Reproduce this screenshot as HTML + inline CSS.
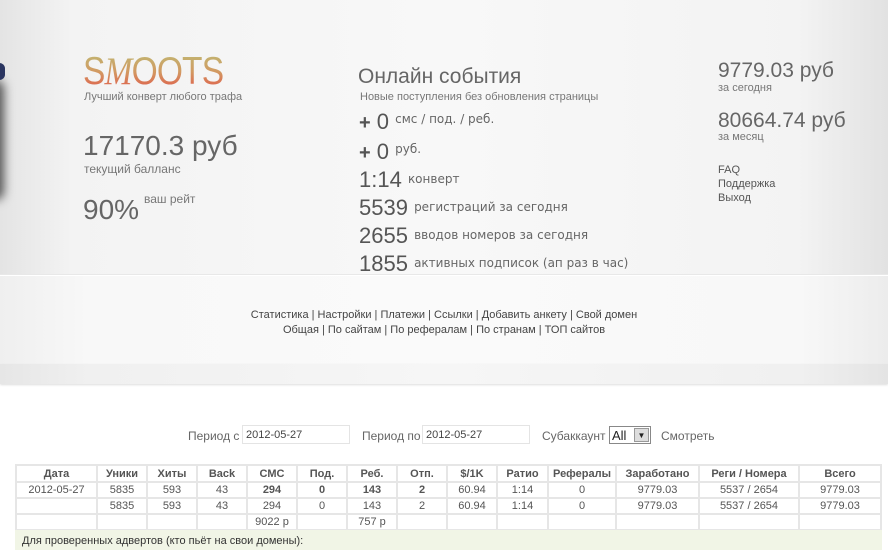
<!DOCTYPE html>
<html><head><meta charset="utf-8"><style>
*{margin:0;padding:0;box-sizing:border-box}
body{width:888px;height:543px;overflow:hidden;background:#fff;font-family:"Liberation Sans",Arial,sans-serif;color:#666;position:relative}
.a{position:absolute;white-space:nowrap}
.panel{position:absolute;left:0;width:888px;background:linear-gradient(90deg,#e4e4e4 0%,#f3f3f3 8%,#f8f8f8 50%,#f3f3f3 90%,#e2e2e2 100%)}
.logo{font-size:39px;line-height:39px;letter-spacing:-1px;transform:scaleX(0.86);transform-origin:0 0;background:linear-gradient(180deg,#bfb873 0%,#d29a62 50%,#e0584a 100%);-webkit-background-clip:text;background-clip:text;color:transparent}
.big{font-size:28px;color:#666}
.sm{font-size:11px;color:#777}
.ev{font-size:22px;color:#555}
.evs{font-family:"DejaVu Sans",sans-serif;font-size:12px;color:#666}
table{position:absolute;left:15px;top:464px;border-collapse:collapse;font-size:11px;color:#555}
td{border:2px solid #e6e6e6;height:16px;text-align:center;padding:0}
th{border:2px solid #e6e6e6;height:17px;font-weight:bold;color:#555;font-size:11px}
.inp{position:absolute;height:19px;border:1px solid #e4e4e4;background:#fff;font-size:11px;padding:3px 3px;color:#444}
</style></head><body>
<div class="panel" style="top:0;height:274px"></div>
<div class="panel" style="top:274px;height:1px;background:#e8e8e8"></div>
<div class="panel" style="top:276px;height:88px;background:linear-gradient(90deg,#efefef 0%,#f8f8f8 10%,#fafafa 50%,#f8f8f8 90%,#ececec 100%)"></div>
<div class="panel" style="top:364px;height:20px;background:linear-gradient(90deg,#e6e6e6 0%,#f0f0f0 10%,#f6f6f6 50%,#f0f0f0 90%,#e4e4e4 100%);box-shadow:0 1px 2px #ddd"></div>
<div class="a" style="left:-14px;top:80px;width:18px;height:120px;border-radius:9px;background:#555;filter:blur(5px)"></div>
<div class="a" style="left:-6px;top:63px;width:11px;height:17px;border-radius:6px;background:#2a3560"></div>

<div class="a logo" style="left:83px;top:52px">S<span style="font-family:'Liberation Serif',serif;font-style:italic">M</span>OOTS</div>
<div class="a sm" style="left:84px;top:91px">Лучший конверт любого трафа</div>
<div class="a big" style="left:83px;top:130px">17170.3 руб</div>
<div class="a sm" style="left:84px;top:162px;font-size:12px">текущий балланс</div>
<div class="a big" style="left:83px;top:194px">90%</div>
<div class="a sm" style="left:144px;top:192px;font-size:12px">ваш рейт</div>

<div class="a" style="left:358px;top:65px;font-size:21px;color:#666">Онлайн события</div>
<div class="a sm" style="left:360px;top:91px">Новые поступления без обновления страницы</div>
<div class="a ev" style="left:359px;top:109px"><b style="font-size:20px">+</b> 0 <span class="evs" style="vertical-align:6px">смс / под. / реб.</span></div>
<div class="a ev" style="left:359px;top:139px"><b style="font-size:20px">+</b> 0 <span class="evs" style="vertical-align:6px">руб.</span></div>
<div class="a ev" style="left:359px;top:167px">1:14 <span class="evs" style="vertical-align:4px">конверт</span></div>
<div class="a ev" style="left:359px;top:195px">5539 <span class="evs" style="vertical-align:4px">регистраций за сегодня</span></div>
<div class="a ev" style="left:359px;top:223px">2655 <span class="evs" style="vertical-align:4px">вводов номеров за сегодня</span></div>
<div class="a ev" style="left:359px;top:251px">1855 <span class="evs" style="vertical-align:4px">активных подписок (ап раз в час)</span></div>

<div class="a" style="left:718px;top:59px;font-size:21px;color:#666">9779.03 руб</div>
<div class="a sm" style="left:718px;top:82px;font-size:11px">за сегодня</div>
<div class="a" style="left:718px;top:109px;font-size:21px;color:#666">80664.74 руб</div>
<div class="a sm" style="left:718px;top:131px;font-size:11px">за месяц</div>
<div class="a sm" style="left:718px;top:163px;color:#555;line-height:14px">FAQ<br>Поддержка<br>Выход</div>

<div class="a" style="left:0;width:888px;top:308px;text-align:center;font-size:11px;color:#444;line-height:15px">Статистика | Настройки | Платежи | Ссылки | Добавить анкету | Свой домен<br>Общая | По сайтам | По рефералам | По странам | ТОП сайтов</div>

<div class="a" style="left:188px;top:429px;font-size:12px;color:#666">Период с</div>
<div class="inp" style="left:242px;top:425px;width:108px">2012-05-27</div>
<div class="a" style="left:362px;top:429px;font-size:12px;color:#666">Период по</div>
<div class="inp" style="left:422px;top:425px;width:108px">2012-05-27</div>
<div class="a" style="left:542px;top:429px;font-size:12px;color:#666">Субаккаунт</div>
<div class="a" style="left:609px;top:426px;width:42px;height:18px;border:1px solid #888;background:#fff;font-size:13px;color:#222;padding:1px 2px">All</div>
<div class="a" style="left:634px;top:428px;width:15px;height:14px;background:#ddd;border:1px solid #999;font-size:8px;text-align:center;line-height:13px;color:#222">▼</div>
<div class="a" style="left:661px;top:429px;font-size:12px;color:#666">Смотреть</div>

<table>
<tr><th style="width:81px">Дата</th><th style="width:50px">Уники</th><th style="width:50px">Хиты</th><th style="width:50px">Back</th><th style="width:50px">СМС</th><th style="width:50px">Под.</th><th style="width:50px">Реб.</th><th style="width:50px">Отп.</th><th style="width:50px">$/1K</th><th style="width:51px">Ратио</th><th style="width:68px">Рефералы</th><th style="width:83px">Заработано</th><th style="width:100px">Реги / Номера</th><th style="width:82px">Всего</th></tr>
<tr><td>2012-05-27</td><td>5835</td><td>593</td><td>43</td><td><b>294</b></td><td><b>0</b></td><td><b>143</b></td><td><b>2</b></td><td>60.94</td><td>1:14</td><td>0</td><td>9779.03</td><td>5537 / 2654</td><td>9779.03</td></tr>
<tr><td></td><td>5835</td><td>593</td><td>43</td><td>294</td><td>0</td><td>143</td><td>2</td><td>60.94</td><td>1:14</td><td>0</td><td>9779.03</td><td>5537 / 2654</td><td>9779.03</td></tr>
<tr><td></td><td></td><td></td><td></td><td>9022 р</td><td></td><td>757 р</td><td></td><td></td><td></td><td></td><td></td><td></td><td></td></tr>
</table>
<div class="a" style="left:15px;top:530px;width:867px;height:20px;background:#f1f5e6;font-size:11px;color:#333;padding:5px 7px">Для проверенных адвертов (кто пьёт на свои домены):</div>
</body></html>
